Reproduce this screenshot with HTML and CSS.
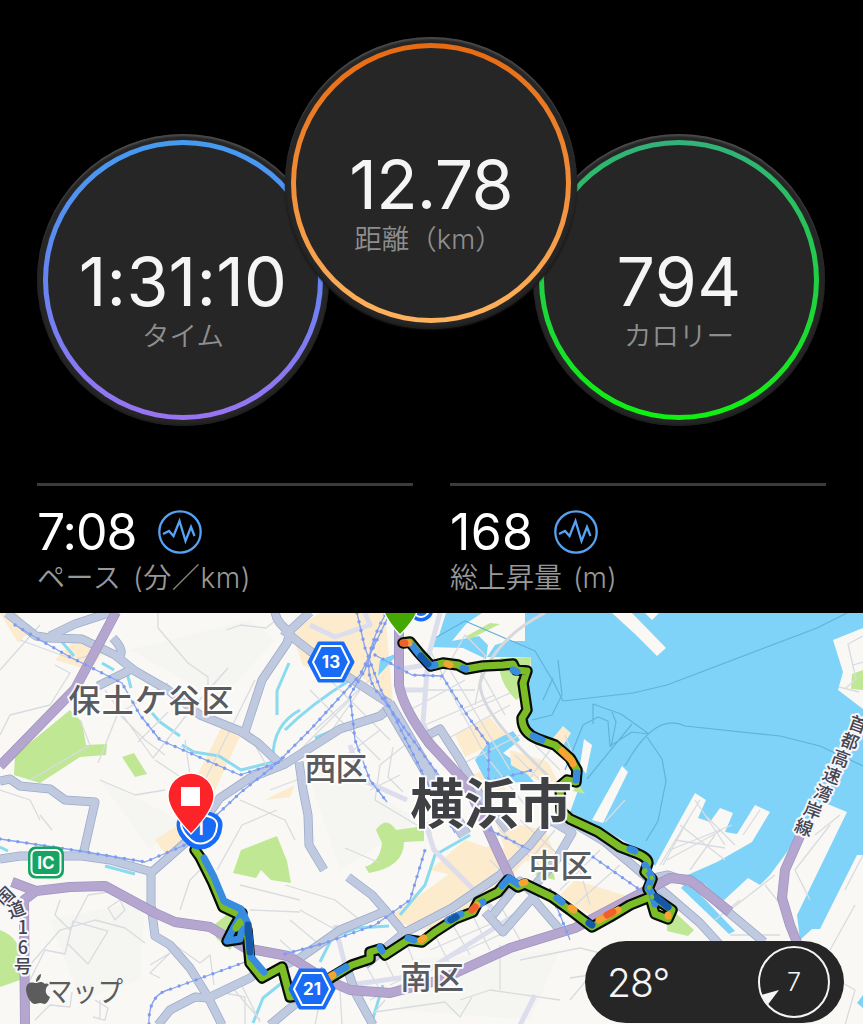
FILE: index.html
```html
<!DOCTYPE html>
<html lang="ja">
<head>
    <meta charset="UTF-8">
    <meta name="viewport" content="width=device-width, initial-scale=1.0">
    <title>ランニング</title>
    <link rel="stylesheet" href="styles.css">
</head>

<body>
    <section class="summary">
        <div class="circles">
            <div class="circle time">
                <div class="ring">
                    <div class="value">1:31:10</div>
                    <div class="label">タイム</div>
                </div>
            </div>
            <div class="circle distance">
                <div class="ring">
                    <div class="value">12.78</div>
                    <div class="label">距離（km）</div>
                </div>
            </div>
            <div class="circle calories">
                <div class="ring">
                    <div class="value">794</div>
                    <div class="label">カロリー</div>
                </div>
            </div>
        </div>
        <div class="stats">
            <div class="stat">
                <div class="stat-row">
                    <span class="stat-value">7:08</span>
                    <svg class="chart-icon" viewBox="0 0 44 44"><circle cx="22" cy="22" r="20.7"/><path d="M5 24l6-3 4.500 5L21.500 11l6 20 5.500-14 3.500 9"/></svg>
                </div>
                <div class="stat-label">ペース (分／km)</div>
            </div>
            <div class="stat">
                <div class="stat-row">
                    <span class="stat-value ascent">168</span>
                    <svg class="chart-icon" viewBox="0 0 44 44"><circle cx="22" cy="22" r="20.7"/><path d="M5 24l6-3 4.500 5L21.500 11l6 20 5.500-14 3.500 9"/></svg>
                </div>
                <div class="stat-label ascent-label">総上昇量 (m)</div>
            </div>
        </div>
    </section>

    <section class="map">
        <svg class="map-canvas" viewBox="0 613 863 411">
            <defs>
                <g id="roads">
                    <path d="M7 613L36 636 50 638 82 639 115 655 135 671 168 690 200 715 240 731 258 743 278 762"/>
                    <path d="M50 636L75 624 112 612M113 638q14 15 4 20M98 686L132 669"/>
                    <path d="M275 610q0 12 15 22L287 643 262 680 245 732"/>
                    <path d="M284 636L310 612M283 630L310 651 345 675 390 704"/>
                    <path d="M392 706L380 716 340 729 310 748 285 764 250 778 220 798 193 836 152 872 110 860 82 856 20 856 0 859"/>
                    <path d="M0 781L10 779 20 786 50 789 65 800 95 802 83 855"/>
                    <path d="M151 872L151 905 155 936 170 945 190 968 208 997 222 1025"/>
                    <path d="M158 1025L170 1010 195 997 208 998 250 978 262 969"/>
                    <path d="M270 1025L300 1000M295 1000L325 970"/>
                    <path d="M299 762L303 790 308 815 309 845 324 870"/>
                    <path d="M285 965L300 958 340 930 386 911 372 895 348 877M386 911L404 933 365 965M404 933L452 908 500 875 530 845 550 820 572 833 555 862 535 885"/>
                    <path d="M346 965L355 992 373 1025"/>
                    <path d="M426 736L440 729 460 760 480 795 508 830"/>
                    <path d="M493 915L520 881 535 895 503 932 485 912M530 895L560 930"/>
                    <path d="M560 815L605 842 650 880 700 923 720 945M654 878L668 875 700 886 720 905 764 942"/>
                </g>
                <path id="trunk-road" d="M388 704L412 745 438 790 465 835"/>
                <g id="expressways">
                    <path d="M116 612L75 689 0 766"/>
                    <path d="M25 1025L24 900 36 891 70 887 105 886 155 913 175 922 210 927 245 948 288 956 325 979 350 990 390 993 440 980 510 948 575 928 630 899 670 878 690 880 730 912"/>
                    <path d="M804 827L785 870 782 898 790 925 800 950M12 882L36 891"/>
                    <path d="M399 613L399 685Q403 708 429 743L465 782 478 808 498 852 512 882"/>
                </g>
                <g id="rails">
                    <path d="M15 625L40 640 70 657 100 672 122 683 140 715 160 740 190 753 240 775 277 763 310 730 360 675 390 613"/>
                    <path d="M0 839L80 851 145 862 185 845 240 793 285 757M149 1024q-1-30 22-35L245 962M285 954L325 943 375 925 410 900 425 850M357 613l8 35 15 40 45 90 30 55"/>
                    <path d="M375 640l-10 30-15 25 5 45 15 40 17 22M375 655l37 20 30 1 27 42 20 27-1 60"/>
                    <path d="M593 857l50 35M385 615q-30 55-5 80l60 82M490 830l40 20M550 890l20 50M487 782l45-12"/>
                </g>
                <path id="route" d="M403 643l7-1 9 11 12 13 12-3 15 2 8 4 17-3 20-1 10-1 3 6 11 1-4 12 4 27-5 8q0 15 16 21l17 6 15 13 7 12-1 12-9-2-7 6 1 25 9 8 28 13 22 15 13 5q15 5 15 11l-3 9 7 7-4 10 5 8 19 13-4 9-13-5-5-17-20 8-20 12-18 10-22-17-18-13-27-13-7 3-10-7-10 12-20 10-5 10-18 7-20 13-13 10-14-2-23 15-5-6-10 3 0 7-18 6-20 12-22 17-20 3-8-30-20 11-12-15-3-33-7-15-17-8-10-24-13-26-5-7"/>
            </defs>

            <rect class="land" x="0" y="613" width="863" height="411"/>
            <path class="hill" d="M130 650L250 620 275 640 220 700zM300 750L420 820 340 870zM100 780L180 820 150 850zM50 920L145 900 140 980 80 1000zM400 960L560 950 530 1020 400 1010z"/>

            <g class="town">
                <path d="M0 613h18l10 20-10 10zM75 640l30 10-15 20-35-10zM225 720l18 10-28 60-18-14zM320 613h65l8 90-30-25-60-12-12-35z"/>
                <path d="M455 735l35-18 17 20-42 20zM470 775l20-6 20 25-25 5zM385 920l105-75 40 10-35 40-65 35zM430 870l35-30 45 15-35 25zM575 880l65 20-50 15-30-20zM495 820l50 10 10 25-20 10-30-15zM155 840l30-20 10 20-25 20zM265 800l30-15-5 12z"/>
            </g>
            <g class="park">
                <path d="M15 755L70 710 82 722 86 745 107 744 106 755 80 757 40 783 14 775zM122 757l12-4 13 21-12 3zM233 873l8-23 36-14 10 25 4 22-20-3-10-10-5 8zM376 830q10-15 20 0l28-4v15l-20 1q0 25-35 31l-4-6q15-5 17-24zM0 930q28 10 20 50l-20 7zM214 925l16-13 12 18-12 20-14-12z"/>
                <path d="M668 906l26 24-6 6-21-5zM535 875l15-20 5 25z"/>
            </g>

            <g class="water">
                <path d="M525 613H863V855H857L820 929H812L800 940 797 915 847 812 825 803 803 825 787 852 770 875 760 885 748 878 722 902 705 884 683 877 717 862 752 842 770 812 755 805 737 834 725 832 733 813 720 808 710 822 698 818 706 800 695 793 680 820 655 866 648 855 610 833 570 812 580 785 574 765 563 745 530 731 523 717 530 708 524 685 531 680 531 657 487 657 495 645 508 641H525z"/>
                <path d="M446 613h36l-15 10-15 18 27-5 9 9-2 14-23-11-34-1 10-12zM475 760l12-16 26-13 7 9-17 13 17 12 14 17-47 1-8-15zM380 660l20-8-22 24zM863 995l-6 8 6 5zM685 884l10 5 40 42-6 3-48-46z"/>
            </g>
            <g class="land">
                <path d="M612 613h20l34 35-9 8-22-22zM645 613h14l-7 7zM580 765l4-26 8 6-6 29zM592 820l30-54 6 6-25 51zM863 628l-30 12 10 32-5 18 25 19z"/>
            </g>
            <path class="park" d="M500 658l31-1-3 35-12 8q-20-20-16-42zM852 674l11-4v20l-12-1zM578 783l7 11-12-3zM465 637l25-14 10 1-30 15z"/>
            <path class="town" d="M510 750l38 12 10 20-12 3-35-20zM553 738l10-12 8 7-9 14z"/>
            <path class="stream" d="M13 620l18 16M62 642l12 14M102 663l12 7M127 673l4 15M152 713l8 9 20 14M182 745l12 7 25 4 22 14 36-9M289 663l-12 28v24M300 710q-28 15-27 50M285 730q25-25 65-50M315 738l24-10M288 978l-25 20-10 25M320 962l12-24 25-10 32-2M383 985l-12 40M400 915l25-30 10-30 35-20M0 847l8 4M105 866l30 8"/>
            <path class="ferry" d="M435 638l30-17 70 30 18 30 10 20 70-8 34-8 150-57 44-22M543 700l10-22M532 720l20-5 10-20-4-35M565 770l18-45 15-8 10 4 2 25 22-14 17 2-28-20-28-10v20M587 779l45-55M612 712l4 10-5 25M625 766q30-55 60-40l95 10 40 10 43 20M647 737l15 22 4 22-8 40-12 20"/>

            <g class="street">
                <path d="M158 613v15l30 35 20 14v20M226 630l15-5 25 3 15-12M0 670l40-45M20 640l55 20 30-10M55 665l15 8-20 32-40 10-10 20M98 763l20-50 10-5 40-25M105 690l48 68 35-45 40-45M120 715l25 25 20 15M138 742l30-30M30 780l60-35-10-25M0 790l30 10 10 20M100 780l35 15 30-5M185 740l10 70M155 760l45 30 20-40 35-70M248 733l20 35M270 790l40-15M240 800l45 20 10 20"/>
                <path d="M40 815l12 15M60 900l-5 15 15 15 18-35 20-3M30 965l30-35 35-10 30 8 20 15M30 980l15-30 20 4 8-33 35 10-20 33-20-20M108 908l12-8 5 10-10 10zM35 1020l15-15 20 2 2-15M100 1000v20M150 965l20-12-20 20 10 5M180 910l10-30 15-15M217 870l25-45 35-15M240 885l60 15M250 910l50 2M165 938l35 25 10-8 4 30M95 1000l13 8-3 12-12-3M220 992l25 5v28M240 982l20 40M230 985l30 35M285 885l50 15 25 20M345 848l35 15M300 910l45 25M290 920l30 25"/>
                <path d="M310 690l70 70M330 680l60 60M350 700l-50 50M360 690l-35 50M375 675l-60 55M405 745l-25 20-5 35 50 30M393 747l-5 30 15 15M340 760l40-30M370 790l30-15M430 650l25 50 30 55 40 50M415 690l60 0M410 710l55-30M425 725l70-30M445 740l65-35M460 765l60-30M450 670l60 100M480 670l25 45M440 680l25-45 20 20-10 50M460 715l50-22M515 755l30 30M535 745l25 25M550 750l-20 28"/>
                <path d="M420 940l60-35M430 950l70-30M360 955l20 35M380 950l15 30M405 940l12 30M430 925l20 40M450 920l20 35M470 910l20 40M500 905l20 35M390 985l120-55M370 1000l50-25M280 940l50 45M320 1000l-5 25M340 990l2 35M360 990l10 25M385 1000l-10 12 70-10 15 15 12-20M460 1000l30-10 70 10M500 945v45M520 960l60-12 40 10M570 1000l25-30"/>
                <path d="M575 850l-40 30M600 850l-40 40M620 865l-45 40M580 870l10 35M500 830l50 45M520 820l50 45M530 860l25-30M490 860l25 25"/>
                <path d="M660 865l40-65M675 840l50 8M670 850l62-25M680 825l45 35M695 800l30 45M705 815l30 30M667 860l55-30M743 835l17-25M688 820l-25 45M715 835l-25 35M730 910l45-35M765 885l20 25M805 1000l-15-15M820 970l35 20-10 35M830 950l25-45M845 890l18-35M715 920l25-20M730 935l50 0M815 835l25-20M810 900l-15-30 35-45"/>
                <path d="M863 636l-15 8 8 35-10 9M853 665l10-3M839 687l20 5M625 800l-20 22M565 735l8 20M620 960l-30 15-20 3"/>
            </g>
            <path class="wide-street" d="M545 613q-50 25-65 70 0 25 45 70l25 25"/>
            <path class="boulevard" d="M440 613l-12 45-5 65 15 30M399 690h25M395 670l30-5M310 625l25 12 35-12-5-12M426 825l8 25 60 60M424 820l6 15M345 965l-10-40M350 985l70-10 95-60M520 1025l15-30M350 745l12 35 45 20"/>

            <use href="#roads" class="road casing"/>
            <use href="#roads" class="road"/>
            <use href="#expressways" class="expressway casing"/>
            <use href="#expressways" class="expressway"/>
            <use href="#trunk-road" class="road trunk casing"/>
            <use href="#trunk-road" class="road trunk"/>
            <use href="#rails" class="rail"/>
            <use href="#rails" class="rail-dots"/>

            <use href="#route" class="route-edge"/>
            <path class="route-edge" d="M242 913l-9 16-6 12 13-2 2-10"/>
            <use href="#route" class="route"/>
            <path class="route blue" d="M242 913l-9 16-6 12 13-2 2-10"/>
            <path class="route" d="M236 928l4-6"/>
            <path class="route blue" d="M412 645l6 8 12 13 5-1M463 668l3 1M513 670l4 2M533 736l9 4M577 773l-1 7M630 849l5 2M645 865l7 12-4 10 4 7 3 10M518 884l-9-6-7 8M562 902l-5-4M480 904l3-2M461 914l-13 6M414 940l-6-2M380 947l2 4M346 967l-12 7M264 972l-13-15-3-33-7-15-17-8-10-24-10-19"/>
            <path class="route deep" d="M421 656l7 8M656 897l12 10M248 925l2 27M592 925l-3-2M456 917l-5 3M248 928l0 6"/>
            <path class="route green-dots" d="M645 870l7 8-3 10 6 17"/>
            <path class="route orange" d="M405 643l4 0M447 664l3 1M562 751l10 10 1 3M618 910l-19 10M571 908l3 2M424 938l-3 2M477 905l-4 5M525 882l-3 1M333 975l-2 1M668 915l0 1"/>
            <path class="route red" d="M403 643l2 0M475 907l-3 3M613 912l-6 3"/>

            <!-- road signs -->
            <g class="sign">
                <path class="sign-edge" d="M319 643h24l10 19-10 19h-24l-10-19z"/>
                <path class="sign-line" d="M321 646h20l8 16-8 16h-20l-8-16z"/>
                <text x="331" y="668">13</text>
                <path class="sign-edge" d="M300 970h24l10 19-10 19h-24l-10-19z"/>
                <path class="sign-line" d="M302 973h20l8 16-8 16h-20l-8-16z"/>
                <text x="312" y="995">21</text>
                <path class="sign-edge" d="M178 825q0-12 21-13 23 1 22 14-1 14-12 20-11 5-20-2-11-9-11-19z"/>
                <path class="sign-line" d="M181 825q1-9 18-10 19 1 18 11-1 12-10 16-9 4-16-2-9-8-10-15z"/>
                <text x="200" y="835">1</text>
                <circle class="sign-edge" cx="421" cy="609" r="11"/>
                <circle class="sign-line" cx="421" cy="609" r="8"/>
            </g>
            <g class="sign ic">
                <rect class="sign-edge" x="29.500" y="848" width="33" height="29" rx="6"/>
                <rect class="sign-line" x="31.500" y="850" width="29" height="25" rx="5"/>
                <text x="46" y="869">IC</text>
            </g>

            <g class="place">
                <text x="151" y="712" textLength="165">保土ケ谷区</text>
                <text x="336" y="780" textLength="63">西区</text>
                <text x="560.500" y="877" textLength="64">中区</text>
                <text x="432" y="989" textLength="64">南区</text>
                <text class="city" x="491" y="824" textLength="162">横浜市</text>
            </g>
            <g class="road-name">
                <text transform="translate(858 724) rotate(20)" y="7">首</text>
                <text transform="translate(850 741) rotate(20)" y="7">都</text>
                <text transform="translate(841 758) rotate(20)" y="7">高</text>
                <text transform="translate(832 775) rotate(20)" y="7">速</text>
                <text transform="translate(823 793) rotate(20)" y="7">湾</text>
                <text transform="translate(813 810) rotate(20)" y="7">岸</text>
                <text transform="translate(804 827) rotate(20)" y="7">線</text>
                <text transform="translate(5 896) rotate(-45)" y="7">国</text>
                <text transform="translate(16 909) rotate(-20)" y="7">道</text>
                <text x="23" y="934">1</text>
                <text x="23" y="954">6</text>
                <text x="23" y="973">号</text>
            </g>

            <!-- start and goal pins -->
            <path class="pin start" d="M384 612q4 10 16 23 13-13 17-23z"/>
            <path class="pin goal" d="M191 834Q168 810 168 796A23 23 0 0 1 214 796Q214 810 191 834z"/>
            <rect class="pin-square" x="181" y="787" width="19" height="19"/>

            <g class="attribution">
                <path d="M45 984c-4-4-7-1-9-1s-9-3-10 6c0 7 5 15 9 15 2 0 3-1 5-1s3 1 5 1c2-1 4-4 5-7-6-3-5-10-1-12-1-1-2-2-4-1zM36 982c0-4 2-7 5-8 0 4-2 7-5 8z"/>
                <text x="47" y="1002" textLength="76" lengthAdjust="spacingAndGlyphs">マップ</text>
            </g>
        </svg>

        <div class="weather">
            <span class="temperature">28°</span>
            <div class="wind">
                <svg class="wind-arrow" viewBox="0 0 72 72"><path d="M3 49l18-5-11 14.500z"/></svg>
                <span>7</span>
            </div>
        </div>
    </section>
</body>
</html>
```
FILE: styles.css
```css
body {
    margin: 0px;
    width: 863px;
    height: 1024px;
    overflow: hidden;
    background: black;
    color: #f5f5f5;
    font-family: Inter, "Noto Sans CJK JP", sans-serif;
}
.summary {
    height: 613px;
    box-sizing: border-box;
    padding: 37px 37px 0px;
}
.circles {
    display: flex;
    align-items: flex-start;
}
.circle {
    width: 292px;
    height: 292px;
    flex: none;
    box-sizing: border-box;
    padding: 6px;
    border-radius: 50%;
    background: #262626;
    box-shadow: inset 0px 3px 2px -1px #4d4d4d, inset 0px -2px 2px #1e1e1e;
}
.time, .calories {
    margin-top: 97px;
}
.distance {
    position: relative;
    margin: 0px -44px;
    box-shadow: inset 0px 3px 2px -1px #4d4d4d, inset 0px -2px 2px #1e1e1e, 0px 1px 2px #151515;
}
.ring {
    height: 280px;
    box-sizing: border-box;
    padding-top: 96px;
    border: 5px solid transparent;
    border-radius: 50%;
    text-align: center;
}
.time .ring {
    background: linear-gradient(#262626, #262626) padding-box, linear-gradient(#449bf0, #6684f3 50%, #9a73f2) border-box;
}
.distance .ring {
    background: linear-gradient(#262626, #262626) padding-box, linear-gradient(#e66a12, #f18d38 50%, #ffb35e) border-box;
}
.calories .ring {
    background: linear-gradient(#262626, #262626) padding-box, linear-gradient(#32b27a, #20d044 50%, #10f010) border-box;
}
.value {
    height: 80px;
    font-size: 68px;
    line-height: 80px;
    letter-spacing: -0.8px;
}
.time .value {
    letter-spacing: 0.2px;
}
.calories .value {
    letter-spacing: 0.3px;
}
.label {
    margin-top: -2px;
    color: #8e8e8e;
    font-size: 27.5px;
    line-height: 34px;
    font-weight: 350;
    white-space: nowrap;
}
.distance .label {
    margin-left: -5px;
}
.stats {
    display: flex;
    gap: 37px;
    margin-top: 57px;
}
.stat {
    width: 376px;
    border-top: 3px solid #3b3b3b;
}
.stat-row {
    display: flex;
    align-items: center;
    gap: 21px;
    height: 60px;
    margin-top: 16px;
}
.stat-value {
    font-size: 50px;
    letter-spacing: -1px;
    color: white;
}
.ascent {
    letter-spacing: 0.3px;
}
.chart-icon {
    width: 44px;
    height: 44px;
    fill: none;
    stroke: #55a3f2;
    stroke-width: 2.3;
}
.stat-label {
    color: #989898;
    font-size: 28px;
    line-height: 34px;
    font-weight: 350;
    letter-spacing: 0.6px;
    word-spacing: 3px;
    margin-top: -1px;
}
.ascent-label {
    letter-spacing: 0px;
    word-spacing: 3px;
}

/* map */
.map {
    position: relative;
    height: 411px;
    overflow: hidden;
}
.map-canvas {
    display: block;
    width: 863px;
    height: 411px;
    fill: none;
    stroke-linejoin: round;
}
.land {
    fill: #f9f8f4;
}
.hill {
    fill: #f5f5f1;
}
.town {
    fill: #fdebcd;
}
.park {
    fill: #bfe794;
}
.water {
    fill: #7fd3f9;
}
.stream {
    stroke: #8adaf0;
    stroke-width: 3;
}
.ferry {
    stroke: #5fb3dc;
    stroke-width: 1.2;
}
.street {
    stroke: #d8dbe0;
    stroke-width: 1.3;
}
.wide-street {
    stroke: #d5d9de;
    stroke-width: 3;
}
.boulevard {
    stroke: #dcdeed;
    stroke-width: 5;
}
.road {
    stroke: #bfcae1;
    stroke-width: 7.5;
}
.road.casing {
    stroke: #9dabca;
    stroke-width: 9;
}
.road.trunk {
    stroke-width: 12;
}
.road.trunk.casing {
    stroke-width: 13.5;
}
.expressway {
    stroke: #b5a6d0;
    stroke-width: 8.5;
}
.expressway.casing {
    stroke: #a193c0;
    stroke-width: 10;
}
.rail {
    stroke: #86a3f0;
    stroke-width: 1.3;
}
.rail-dots {
    stroke: #7f9cf0;
    stroke-width: 3.4;
    stroke-linecap: round;
    stroke-dasharray: 0 9;
}
.route-edge {
    stroke: #080c08;
    stroke-width: 11.5;
    stroke-linecap: round;
}
.route {
    stroke: #7cbd27;
    stroke-width: 7;
    stroke-linecap: round;
}
.blue {
    stroke: #378ce0;
}
.deep {
    stroke: #1658a8;
}
.orange {
    stroke: #f6a334;
}
.red {
    stroke: #f0602a;
}
.green-dots {
    stroke-width: 4;
    stroke-dasharray: 1 9;
}
.sign-edge {
    fill: #176bf5;
    stroke: #176bf5;
    stroke-width: 3;
}
.sign-line {
    stroke: white;
    stroke-width: 2;
}
.ic .sign-edge {
    fill: #17a463;
    stroke: #17a463;
}
.sign text {
    fill: white;
    font-size: 17px;
    font-weight: 700;
    text-anchor: middle;
}
.place {
    font-family: "Noto Sans CJK JP", sans-serif;
    font-size: 32px;
    font-weight: 500;
    fill: #5a5b5e;
    stroke: rgba(255,255,255,0.9);
    stroke-width: 4;
    paint-order: stroke;
    text-anchor: middle;
}
.place .city {
    font-size: 54px;
    fill: #404144;
    font-weight: 700;
}
.road-name {
    font-family: "Noto Sans CJK JP", sans-serif;
    font-size: 18px;
    font-weight: 500;
    fill: #454550;
    stroke: #f7f7fc;
    stroke-width: 4;
    paint-order: stroke;
    text-anchor: middle;
}
.pin {
    stroke: white;
    stroke-width: 1.3;
}
.start {
    fill: #45a800;
}
.goal {
    fill: #fc2429;
}
.pin-square {
    fill: white;
}
.attribution {
    fill: #5c5c5c;
    font-family: "Noto Sans CJK JP", sans-serif;
    font-size: 28px;
}
.weather {
    position: absolute;
    left: 585px;
    bottom: 1px;
    width: 259px;
    height: 82px;
    box-sizing: border-box;
    padding: 0px 14px 0px 22px;
    display: flex;
    align-items: center;
    justify-content: space-between;
    border-radius: 41px;
    background: #262626;
}
.temperature {
    font-size: 39px;
    font-weight: 350;
    letter-spacing: -0.9px;
}
.wind {
    position: relative;
    width: 72px;
    height: 72px;
    box-sizing: border-box;
    border: 2px solid #f5f5f5;
    border-radius: 50%;
    font-size: 25px;
    font-weight: 300;
    line-height: 68px;
    text-align: center;
}
.wind-arrow {
    position: absolute;
    left: -2px;
    top: -2px;
    width: 72px;
    height: 72px;
    fill: #f5f5f5;
}
```
